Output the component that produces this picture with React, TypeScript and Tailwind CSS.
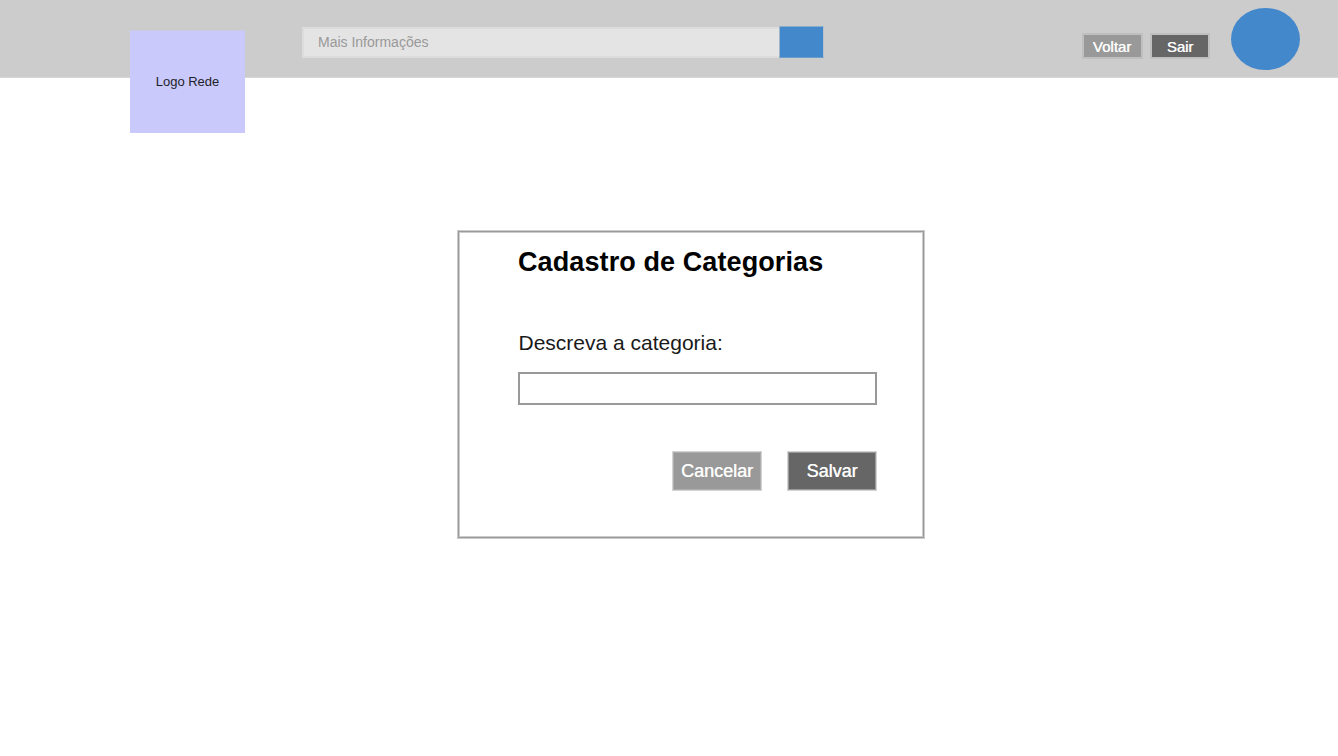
export default function App() {
  return (
    <div className="h-[756px] w-full overflow-hidden bg-white font-['Liberation_Sans',Arial,sans-serif] whitespace-nowrap">
      <header className="flex h-[78px] items-start border-b border-[#d6d6d6] bg-[#ccc]">
        <div className="ml-[130px] mt-[30px] flex h-[103px] w-[115px] shrink-0 items-center justify-center border-t border-[#cacae4] bg-[#c9c9fc] text-[13px] text-[#1e1e28]">
          Logo Rede
        </div>
        <div className="ml-[57px] mt-[26px] flex shrink-0">
          <div className="mt-px flex h-[31px] w-[477px] items-center border-2 border-r-0 border-[#dcdcdc] bg-[#e4e4e4] pb-px pl-[14px] text-[14px] leading-5 text-[#999]">
            Mais Informações
          </div>
          <button aria-label="Buscar" className="h-8 w-[45px] border border-t-[#8badcc] border-r-[#b8c2cc] border-b-[#6a9dcc] border-l-[#9db6cc] bg-[#4488cc]" />
        </div>
        <nav className="ml-auto mr-[38px] flex shrink-0">
          <button className="mt-[33px] h-[26px] w-[61px] border-2 border-[#bfbfbf] bg-[#999] pt-px pr-px text-[15px] leading-[21px] text-white [text-shadow:0.5px_0_0_#ffffffcc]">Voltar</button>
          <button className="ml-[7px] mt-[33px] h-[26px] w-[60px] border-2 border-[#bfbfbf] bg-[#666] pt-px text-[15px] leading-[21px] text-white [text-shadow:0.5px_0_0_#ffffffcc]">Sair</button>
          <div className="ml-[21px] mt-[7.5px] h-[62.5px] w-[69px] rounded-[50%] bg-[#4488cc]" />
        </nav>
      </header>
      <main className="ml-[457px] mt-[152px] h-[309px] w-[468px] border border-[#ccc] pl-[60px] pt-[13px] shadow-[inset_0_0_0_1px_#999,inset_0_0_0_2px_#ccc]">
        <h1 className="h-[36px] text-[27px] leading-[36px] font-bold tracking-[0.1px] text-black">Cadastro de Categorias</h1>
        <label className="mt-[51px] block h-6 pl-[0.5px] text-[21px] leading-6 text-[#1a1a1a]" htmlFor="categoria">Descreva a categoria:</label>
        <input id="categoria" className="mt-[17px] block h-[33px] w-[359px] border-2 border-[#999] bg-white px-2 outline-none" />
        <div className="mt-[46px] flex w-[359px] justify-end gap-[25px]">
          <button className="h-10 w-[90px] border border-[#d4d4d4] bg-[#999] text-[18px] text-white shadow-[inset_0_0_0_1px_#acacac] [text-shadow:0.5px_0_0_#ffffffcc]">Cancelar</button>
          <button className="h-10 w-[90px] border border-[#d4d4d4] bg-[#666] text-[18px] text-white shadow-[inset_0_0_0_1px_#999] [text-shadow:0.5px_0_0_#ffffffcc]">Salvar</button>
        </div>
      </main>
    </div>
  );
}
